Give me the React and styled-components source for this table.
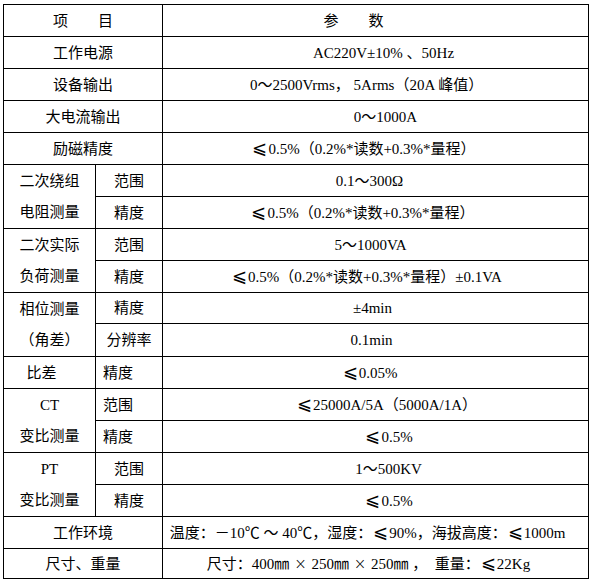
import React from "react";
import styled, { createGlobalStyle } from "styled-components";

const Global = createGlobalStyle`
  html, body { margin: 0; padding: 0; background: #fff; }
  body { width: 593px; height: 583px; overflow: hidden; }
`;

const Sheet = styled.table`
  border-collapse: collapse;
  table-layout: fixed;
  width: 585px;
  margin: 4px 0 0 3px;
  font-family: "Liberation Serif", "Noto Sans CJK SC", serif;
  font-size: 15px;
  color: #000;
`;

const Row = styled.tr`
  height: ${(p) => p.$h || 32}px;
`;

const Cell = styled.td`
  border: 1px solid #000;
  padding: 0 ${(p) => (p.$shift < 0 ? -2 * p.$shift : 0)}px 0
    ${(p) => (p.$shift > 0 ? 2 * p.$shift : 0)}px;
  text-align: center;
  vertical-align: middle;
  white-space: nowrap;
  line-height: 20px;
`;

const Label = styled(Cell)`
  ${(p) => (p.$left ? "text-align: left; padding-left: 7px;" : "")}
`;

const Stack = styled.div`
  display: flex;
  flex-direction: column;
  align-items: center;
  & > span {
    height: 31px;
    line-height: 31px;
  }
  & > span:first-child {
    height: 32px;
    line-height: 32px;
  }
`;

const Value = styled(Cell)``;

const Sym = styled.span`
  font-family: "DejaVu Sans", "Noto Sans CJK SC", sans-serif;
  font-size: ${(p) => p.$size || 17}px;
  line-height: 1;
  font-weight: 300;
  margin: 0 1px;
`;

const LE = <Sym $size={18}>⩽</Sym>;
const X = <Sym $size={15}>×</Sym>;

export default function App() {
  return (
    <>
      <Global />
      <Sheet>
        <colgroup>
          <col style={{ width: 92 }} />
          <col style={{ width: 67 }} />
          <col style={{ width: 426 }} />
        </colgroup>
        <tbody>
          <Row>
            <Label colSpan={2}>项　　目</Label>
            <Value $shift={-22}>参　　数</Value>
          </Row>
          <Row>
            <Label colSpan={2}>工作电源</Label>
            <Value $shift={8}>AC220V±10% 、50Hz</Value>
          </Row>
          <Row>
            <Label colSpan={2}>设备输出</Label>
            <Value $shift={-9}>0～2500Vrms， 5Arms（20A 峰值）</Value>
          </Row>
          <Row>
            <Label colSpan={2}>大电流输出</Label>
            <Value $shift={10}>0～1000A</Value>
          </Row>
          <Row>
            <Label colSpan={2}>励磁精度</Label>
            <Value $shift={-12}>{LE}0.5%（0.2%*读数+0.3%*量程）</Value>
          </Row>
          <Row>
            <Label rowSpan={2}>
              <Stack><span>二次绕组</span><span>电阻测量</span></Stack>
            </Label>
            <Label>范围</Label>
            <Value $shift={-6}>0.1～300Ω</Value>
          </Row>
          <Row>
            <Label>精度</Label>
            <Value $shift={-13}>{LE}0.5%（0.2%*读数+0.3%*量程）</Value>
          </Row>
          <Row>
            <Label rowSpan={2}>
              <Stack><span>二次实际</span><span>负荷测量</span></Stack>
            </Label>
            <Label>范围</Label>
            <Value $shift={-5}>5～1000VA</Value>
          </Row>
          <Row>
            <Label>精度</Label>
            <Value $shift={-9}>{LE}0.5%（0.2%*读数+0.3%*量程）±0.1VA</Value>
          </Row>
          <Row $h={31}>
            <Label rowSpan={2}>
              <Stack><span>相位测量</span><span>（角差）</span></Stack>
            </Label>
            <Label>精度</Label>
            <Value $shift={-3}>±4min</Value>
          </Row>
          <Row>
            <Label>分辨率</Label>
            <Value $shift={-4}>0.1min</Value>
          </Row>
          <Row>
            <Label $shift={-8}>比差</Label>
            <Label $left>精度</Label>
            <Value $shift={-6}>{LE}0.05%</Value>
          </Row>
          <Row>
            <Label rowSpan={2}>
              <Stack><span>CT</span><span>变比测量</span></Stack>
            </Label>
            <Label $left>范围</Label>
            <Value $shift={11}>{LE}25000A/5A（5000A/1A）</Value>
          </Row>
          <Row>
            <Label $left>精度</Label>
            <Value $shift={13}>{LE}0.5%</Value>
          </Row>
          <Row>
            <Label rowSpan={2}>
              <Stack><span>PT</span><span>变比测量</span></Stack>
            </Label>
            <Label>范围</Label>
            <Value $shift={13}>1～500KV</Value>
          </Row>
          <Row>
            <Label>精度</Label>
            <Value $shift={13}>{LE}0.5%</Value>
          </Row>
          <Row>
            <Label colSpan={2}>工作环境</Label>
            <Value $shift={-8}>温度：－10℃ ～ 40℃，湿度：{LE}90%，海拔高度：{LE}1000m</Value>
          </Row>
          <Row $h={30}>
            <Label colSpan={2}>尺寸、重量</Label>
            <Value $shift={-7}>尺寸：400㎜ {X} 250㎜ {X} 250㎜ ，　重量：{LE}22Kg</Value>
          </Row>
        </tbody>
      </Sheet>
    </>
  );
}
